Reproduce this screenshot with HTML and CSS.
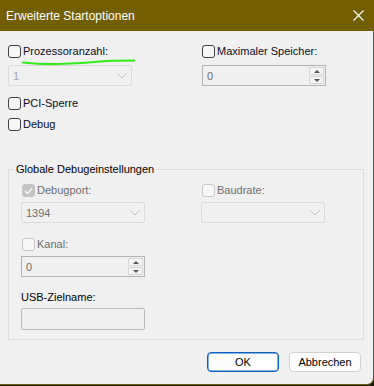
FILE: index.html
```html
<!DOCTYPE html>
<html lang="de">
<head>
    <meta charset="UTF-8">
    <meta name="viewport" content="width=device-width, initial-scale=1.0">
    <title>Erweiterte Startoptionen</title>
    <link rel="stylesheet" href="styles.css">
</head>
<body>
    <div class="window">
        <!-- Titelleiste -->
        <header class="titlebar">
            <span class="title">Erweiterte Startoptionen</span>
            <svg class="close" width="11" height="11" viewBox="0 0 11 11">
                <path d="M0.5 0.5 L10.5 10.5 M10.5 0.5 L0.5 10.5" stroke="#fff" stroke-width="1.1" fill="none"/>
            </svg>
        </header>

        <div class="content">
            <div class="row">
                <div class="col">
                    <label class="check mark">
                        <span class="box"></span>Prozessoranzahl:
                        <svg class="scribble" width="130" height="24" viewBox="0 0 130 24">
                            <path d="M15 17.5 C24 18.5 34 19.5 50 19 C66 18.5 78 18 92 16.5 C104 15.5 116 15.5 126 15.5" stroke="#33ea1c" stroke-width="2.2" fill="none" stroke-linecap="round"/>
                        </svg>
                    </label>
                    <div class="field combo">
                        <span class="value light">1</span>
                        <svg class="chevron" width="10" height="6" viewBox="0 0 10 6"><path d="M0.5 0.5 L5 5 L9.5 0.5" stroke="#bdbdbd" fill="none"/></svg>
                    </div>
                </div>
                <div class="col">
                    <label class="check"><span class="box"></span>Maximaler Speicher:</label>
                    <div class="field spin">
                        <span class="value">0</span>
                        <div class="spin-btns">
                            <span class="up"></span>
                            <span class="down"></span>
                        </div>
                    </div>
                </div>
            </div>

            <label class="check pci"><span class="box"></span>PCI-Sperre</label>
            <label class="check debug"><span class="box"></span>Debug</label>

            <!-- Debugeinstellungen -->
            <fieldset class="group">
                <legend>Globale Debugeinstellungen</legend>
                <div class="row inner">
                    <div class="col">
                        <label class="check off">
                            <span class="box checked">
                                <svg width="9" height="8" viewBox="0 0 9 8"><path d="M1 4 L3.5 6.5 L8 1.5" stroke="#fff" stroke-width="1.2" fill="none"/></svg>
                            </span>Debugport:
                        </label>
                        <div class="field combo">
                            <span class="value">1394</span>
                            <svg class="chevron" width="10" height="6" viewBox="0 0 10 6"><path d="M0.5 0.5 L5 5 L9.5 0.5" stroke="#bdbdbd" fill="none"/></svg>
                        </div>
                    </div>
                    <div class="col">
                        <label class="check off"><span class="box"></span>Baudrate:</label>
                        <div class="field combo">
                            <span class="value"></span>
                            <svg class="chevron" width="10" height="6" viewBox="0 0 10 6"><path d="M0.5 0.5 L5 5 L9.5 0.5" stroke="#bdbdbd" fill="none"/></svg>
                        </div>
                    </div>
                </div>

                <label class="check off kanal"><span class="box"></span>Kanal:</label>
                <div class="field spin">
                    <span class="value">0</span>
                    <div class="spin-btns">
                        <span class="up"></span>
                        <span class="down"></span>
                    </div>
                </div>

                <div class="usb-label">USB-Zielname:</div>
                <div class="textbox"></div>
            </fieldset>

            <div class="buttons">
                <button class="default">OK</button>
                <button>Abbrechen</button>
            </div>
        </div>
    </div>
</body>
</html>
```

FILE: styles.css
```css
* {
    margin: 0;
    padding: 0;
    box-sizing: border-box;
    font-family: "Segoe UI", "Liberation Sans", Arial, sans-serif;
}

html, body {
    width: 374px;
    height: 386px;
    overflow: hidden;
    background-color: #1d1a10;
}

.window {
    width: 374px;
    height: 385px;
    background-color: #f0f0f0;
    border-right: 1px solid #735e02;
    border-bottom: 1px solid #735e02;
    border-radius: 0 0 7px 0;
    overflow: hidden;
    font-size: 11px;
    color: #000;
}

/* Titelleiste */
.titlebar {
    height: 31px;
    background-color: #735e02;
    color: #fff;
    display: flex;
    align-items: center;
    justify-content: space-between;
    padding: 0 9px 0 6px;
}

.titlebar .title {
    font-size: 12px;
}

/* Inhalt */
.content {
    padding: 14px 0 0 8px;
}

.row {
    display: grid;
    grid-template-columns: 194px 124px;
}

.row.inner {
    grid-template-columns: 180px 124px;
}

.check {
    display: flex;
    align-items: center;
    gap: 2px;
    height: 13px;
    line-height: 13px;
    white-space: nowrap;
    color: #0c0c1e;
}

.check .box {
    width: 13px;
    height: 13px;
    flex: none;
    border: 1px solid #404040;
    border-radius: 3px;
    background-color: #f7f7f7;
    display: flex;
    align-items: center;
    justify-content: center;
}

.check .box.checked {
    background-color: #c4c4c4;
    border-color: #c4c4c4;
}

.check.off {
    color: #6d6d6d;
    margin-left: 1px;
}

.check.off .box {
    border-color: #c6c6c6;
}

.check.mark {
    position: relative;
}

.check.mark .scribble {
    position: absolute;
    left: 0;
    top: 0;
    overflow: visible;
    pointer-events: none;
}

.pci {
    margin-top: 11px;
}

.debug {
    margin-top: 8px;
}

/* Eingabefelder */
.field {
    width: 124px;
    height: 21px;
    margin-top: 7px;
    display: flex;
    align-items: center;
    justify-content: space-between;
    padding-left: 4px;
    color: #6d6d6d;
}

.field .value.light {
    color: #a3a3a3;
}

.combo {
    border: 1px solid #dadada;
    border-radius: 2px;
    padding-right: 4px;
}

.spin {
    border: 1px solid #b3b3b3;
    padding-right: 1px;
}

.spin-btns {
    display: flex;
    flex-direction: column;
    gap: 1px;
}

.spin-btns span {
    width: 15px;
    height: 8px;
    border: 1px solid #d4d4d4;
    border-radius: 1px;
    background-color: #f4f4f4;
    display: flex;
    align-items: center;
    justify-content: center;
}

.spin-btns span::after {
    content: "";
    border-left: 3px solid transparent;
    border-right: 3px solid transparent;
}

.spin-btns .up::after {
    border-bottom: 3px solid #555;
}

.spin-btns .down::after {
    border-top: 3px solid #555;
}

/* Gruppenfeld */
.group {
    width: 356px;
    margin-top: 31px;
    border: 1px solid #dcdcdc;
    padding: 8px 0 9px 12px;
}

.group legend {
    margin-left: -7px;
    padding: 0 2px;
    line-height: 14px;
    font-size: 11px;
}

.group .field {
    margin-top: 5px;
}

.kanal {
    margin-top: 15px;
}

.usb-label {
    margin-top: 13px;
    height: 14px;
    line-height: 14px;
}

.textbox {
    width: 124px;
    height: 22px;
    margin-top: 4px;
    border: 1px solid #b9b9b9;
    border-radius: 2px;
}

/* Schaltflächen */
.buttons {
    display: flex;
    justify-content: flex-end;
    gap: 10px;
    padding-right: 12px;
    margin-top: 12px;
}

.buttons button {
    width: 72px;
    height: 20px;
    border: 1px solid #d0d0d0;
    border-radius: 4px;
    background-color: #fdfdfd;
    font-size: 11px;
    color: #000;
}

.buttons button.default {
    border-color: #0a64c4;
    box-shadow: inset 0 0 0 0.5px #0a64c4;
}
```
